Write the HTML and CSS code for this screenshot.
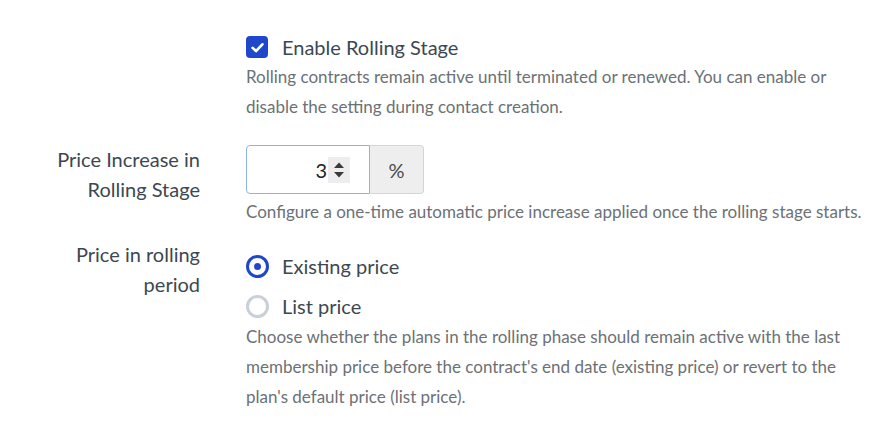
FILE: index.html
```html
<!DOCTYPE html>
<html lang="en">
<head>
<meta charset="utf-8">
<title>Rolling Stage</title>
<link rel="stylesheet" href="styles.css">
</head>
<body>
<form class="form">
  <div class="row row-check">
    <div class="label"></div>
    <div class="control">
      <label class="check-line">
        <span class="checkbox">
          <svg viewBox="0 0 20 20" width="15" height="15"><path d="M3.5 10.5 L8 14.8 L16.5 5.8" fill="none" stroke="#fff" stroke-width="3.6" stroke-linecap="round" stroke-linejoin="round"/></svg>
        </span>
        <span class="check-text">Enable Rolling Stage</span>
      </label>
      <p class="help">Rolling contracts remain active until terminated or renewed. You can enable or disable the setting during contact creation.</p>
    </div>
  </div>

  <div class="row row-price">
    <div class="label">Price Increase in<br>Rolling Stage</div>
    <div class="control">
      <div class="input-group">
        <div class="num-input">
          <span class="num-value">3</span>
          <span class="spinner">
            <svg viewBox="0 0 14 24" width="14" height="24"><path d="M2 10 L7 4.5 L12 10 Z" fill="#3a3a3a"/><path d="M2 14 L7 19.5 L12 14 Z" fill="#3a3a3a"/></svg>
          </span>
        </div>
        <div class="addon">%</div>
      </div>
      <p class="help help-single">Configure a one-time automatic price increase applied once the rolling stage starts.</p>
    </div>
  </div>

  <div class="row row-radio">
    <div class="label">Price in rolling<br>period</div>
    <div class="control control-radio">
      <label class="radio-line"><span class="radio checked"></span><span class="radio-text">Existing price</span></label>
      <label class="radio-line"><span class="radio"></span><span class="radio-text">List price</span></label>
      <p class="help">Choose whether the plans in the rolling phase should remain active with the last membership price before the contract's end date (existing price) or revert to the plan's default price (list price).</p>
    </div>
  </div>
</form>
</body>
</html>
```

FILE: styles.css
```css
html, body {
  margin: 0;
  padding: 0;
  background: #ffffff;
}
body {
  font-family: Lato, "Open Sans", "Liberation Sans", sans-serif;
  color: #3c4851;
}
.form {
  padding-top: 32px;
  width: 880px;
}
.row {
  display: grid;
  grid-template-columns: 200px 1fr;
  column-gap: 46px;
}
.label {
  text-align: right;
  font-size: 20px;
  line-height: 30px;
  color: #3c4851;
}
.control {
  min-width: 0;
}
.help {
  margin: 0;
  font-size: 17px;
  line-height: 30px;
  color: #6c7176;
}
.check-line {
  display: flex;
  align-items: center;
  height: 30px;
}
.checkbox {
  width: 22px;
  height: 22px;
  border-radius: 4px;
  background: #1f47cc;
  display: flex;
  align-items: center;
  justify-content: center;
  margin-right: 14px;
}
.check-text {
  font-size: 20px;
  color: #3c4851;
}
.row-price {
  margin-top: 22px;
}
.input-group {
  display: flex;
  margin-top: 1px;
  height: 49px;
}
.num-input {
  box-sizing: border-box;
  width: 124px;
  height: 49px;
  border: 1px solid #8ab4f0;
  border-radius: 4px 0 0 4px;
  display: flex;
  align-items: center;
  justify-content: flex-end;
  padding-right: 19px;
  background: #fff;
}
.num-value {
  font-size: 20px;
  color: #222;
  margin-right: 1px;
}
.spinner {
  display: flex;
  align-items: center;
  justify-content: center;
  width: 22px;
  height: 26px;
  background: #ededed;
}
.addon {
  box-sizing: border-box;
  width: 54px;
  height: 49px;
  border: 1px solid #d5d5d5;
  border-left: none;
  border-radius: 0 4px 4px 0;
  background: #eeeeee;
  display: flex;
  align-items: center;
  justify-content: center;
  font-size: 20px;
  color: #4a4a4a;
}
.help-single {
  margin-top: 3px;
}
.row-radio {
  margin-top: 12px;
}
.control-radio {
  padding-top: 12px;
}
.radio-line {
  display: flex;
  align-items: center;
  height: 30px;
  margin-bottom: 10px;
}
.radio-line + .radio-line {
  margin-bottom: 1px;
}
.radio {
  box-sizing: border-box;
  width: 23px;
  height: 23px;
  border-radius: 50%;
  border: 3px solid #c9d0d9;
  margin-right: 13px;
  position: relative;
  background: #fff;
}
.radio.checked {
  border: 3px solid #1f47cc;
}
.radio.checked::after {
  content: "";
  position: absolute;
  left: 50%;
  top: 50%;
  width: 7px;
  height: 7px;
  margin: -3.5px 0 0 -3.5px;
  border-radius: 50%;
  background: #1f47cc;
}
.radio-text {
  font-size: 20px;
  color: #3c4851;
}
```
